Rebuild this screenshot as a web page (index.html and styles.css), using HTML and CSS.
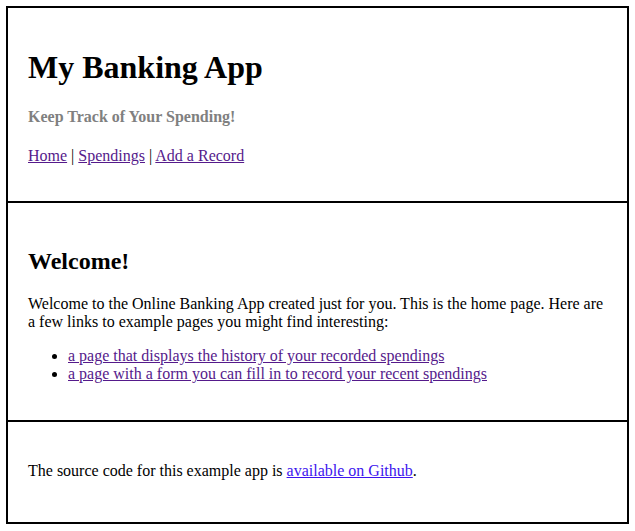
FILE: index.html
```html
<!DOCTYPE html>
<html>
<head>
<meta charset="utf-8">
<title>My Banking App</title>
<link rel="stylesheet" href="styles.css">
</head>
<body>
<div class="page">
  <header class="section header">
    <h1 class="title">My Banking App</h1>
    <h4 class="subtitle">Keep Track of Your Spending!</h4>
    <p class="nav"><a class="visited" href="#">Home</a> | <a class="visited" href="#">Spendings</a> | <a class="visited" href="#">Add a Record</a></p>
  </header>
  <main class="section main">
    <h2 class="heading">Welcome!</h2>
    <p class="text">Welcome to the Online Banking App created just for you. This is the home page. Here are a few links to example pages you might find interesting:</p>
    <ul class="links">
      <li><a class="visited" href="#">a page that displays the history of your recorded spendings</a></li>
      <li><a class="visited" href="#">a page with a form you can fill in to record your recent spendings</a></li>
    </ul>
  </main>
  <footer class="section footer">
    <p class="text">The source code for this example app is <a class="fresh" href="#">available on Github</a>.</p>
  </footer>
</div>
</body>
</html>
```
FILE: styles.css
```css
html, body {
  margin: 0;
  padding: 0;
  background: #ffffff;
}
body {
  padding: 6px;
  font-family: "Liberation Serif", "Times New Roman", serif;
  font-size: 16px;
  color: #000000;
}
.page {
  border: 2px solid #000000;
}
.section {
  display: block;
  padding: 20px;
}
.section + .section {
  border-top: 2px solid #000000;
}
.main {
  padding-top: 25px;
  padding-bottom: 21px;
}
.footer {
  padding-top: 24px;
  padding-bottom: 26px;
}
.title {
  font-size: 32px;
  margin: 21.44px 0;
}
.subtitle {
  font-size: 16px;
  color: #808080;
  margin: 21.28px 0;
}
.heading {
  font-size: 24px;
  margin: 19.92px 0;
}
.text, .nav {
  margin: 16px 0;
}
.links {
  margin: 16px 0;
  padding-left: 40px;
}
.visited {
  color: #551a8b;
}
.fresh {
  color: #3c14ee;
}
```
